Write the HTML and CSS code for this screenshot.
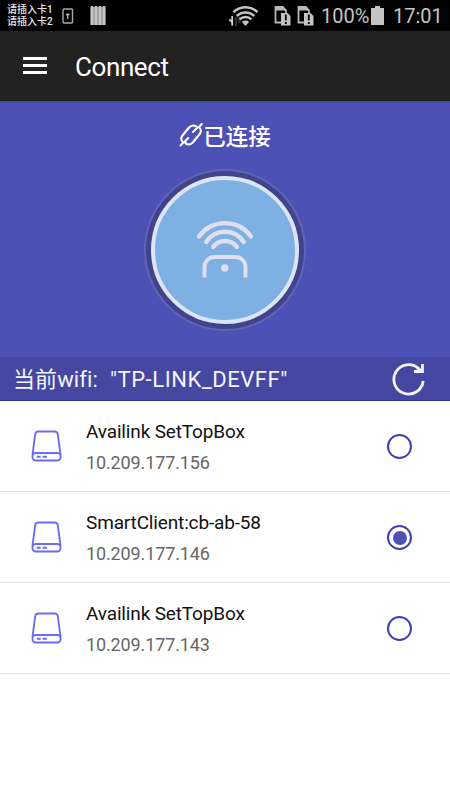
FILE: index.html
```html
<!DOCTYPE html>
<html lang="zh-CN">
<head>
    <meta charset="UTF-8">
    <meta name="viewport" content="width=device-width, initial-scale=1.0">
    <title>Connect</title>
    <link rel="stylesheet" href="styles.css">
</head>
<body>
    <div class="status-bar">
        <div class="sim-text">
            <span>请插入卡1</span>
            <span>请插入卡2</span>
        </div>
        <svg class="icon-usb" width="12" height="16" viewBox="0 0 12 16">
            <rect x="1" y="1" width="9.5" height="14" rx="1" fill="none" stroke="#aaa" stroke-width="1.4"/>
            <path d="M5.7 11V5.5M4 6.5h3.5" fill="none" stroke="#bbb" stroke-width="1.3"/>
        </svg>
        <svg class="icon-bars" width="17" height="20" viewBox="0 0 17 20">
            <path d="M.5 1h15v18h-15z" fill="#999"/>
            <path d="M2 0v19M6 0v19M10 0v19M14 0v19" stroke="#c4c4c4" stroke-width="2.6"/>
        </svg>
        <svg class="icon-wifi" width="30" height="20" viewBox="0 0 30 20">
            <path d="M7 11v9M10.5 11v6" stroke="#333" stroke-width="2.4"/>
            <path d="M3.2 10v9.5M3.2 16L.3 13.5" fill="none" stroke="#d0d0d0" stroke-width="1.8"/>
            <g fill="none" stroke="#c4c4c4" stroke-width="2.5">
                <path d="M4.5 6.2a17 17 0 0 1 24 0"/>
                <path d="M7.8 10a12.5 12.5 0 0 1 17.4 0"/>
                <path d="M10.6 13.3a8.5 8.5 0 0 1 11.8 0"/>
            </g>
            <path d="M12.8 15.8q3.700-2.400 7.400 0L16.500 20z" fill="#c4c4c4"/>
        </svg>
        <svg class="icon-sim" width="17" height="21" viewBox="0 0 17 21">
            <path d="M7 17.500H1.500V2H8.500L12 5.500V8" fill="none" stroke="#b8b8b8" stroke-width="1.800"/>
            <path d="M1 1h8l4 4.500H1z" fill="#b8b8b8"/>
            <path d="M7 8h6.500l3 3v9.500H7z" fill="#c4c4c4"/>
            <path d="M11.800 9.500v6M11.800 17v2" stroke="#000" stroke-width="1.800"/>
        </svg>
        <svg class="icon-sim" width="17" height="21" viewBox="0 0 17 21">
            <path d="M7 17.500H1.500V2H8.500L12 5.500V8" fill="none" stroke="#b8b8b8" stroke-width="1.800"/>
            <path d="M1 1h8l4 4.500H1z" fill="#b8b8b8"/>
            <path d="M7 8h6.500l3 3v9.500H7z" fill="#c4c4c4"/>
            <path d="M11.800 9.500v6M11.800 17v2" stroke="#000" stroke-width="1.800"/>
        </svg>
        <span class="battery-text">100%</span>
        <svg class="icon-battery" width="13" height="19" viewBox="0 0 13 19">
            <path d="M4 0h5v2h4v17H0V2h4z" fill="#c4c4c4"/>
        </svg>
        <span class="clock">17:01</span>
    </div>

    <div class="toolbar">
        <div class="menu-button">
            <span></span>
            <span></span>
            <span></span>
        </div>
        <h1>Connect</h1>
    </div>

    <div class="hero">
        <div class="state">
            <svg width="24" height="24" viewBox="0 0 24 24" fill="none" stroke="#fff" stroke-width="2.1" stroke-linecap="round" stroke-linejoin="round">
                <path d="M1.500 22.500l3-3C2 18 1.500 15 3.500 12.500L10 4.500C12.500 2 16.500 1.500 18.500 4.500L14 9"/>
                <path d="M22.700 1L20 4C22.200 6 22.200 9 20.700 11L14.200 19C11.200 22.300 7.500 22.500 5.700 18.800L9.200 15"/>
            </svg>
            <span>已连接</span>
        </div>
        <div class="dial">
            <div class="dial-inner">
                <svg width="60" height="60" viewBox="0 0 60 60" fill="none" stroke="#dfdff0" stroke-width="4.4" stroke-linecap="round">
                    <path d="M4 16.500a32 32 0 0 1 52 0"/>
                    <path d="M11.200 22a22.300 22.300 0 0 1 37.600 0"/>
                    <path d="M18.200 27a14.600 14.600 0 0 1 23.600 0"/>
                    <path d="M9.500 57.500V47a10 10 0 0 1 10-10h21a10 10 0 0 1 10 10v10.500" stroke-width="3.800" stroke-linecap="butt"/>
                    <circle cx="29.800" cy="48" r="3.700" fill="#dfdff0" stroke="none"/>
                </svg>
            </div>
        </div>
    </div>

    <div class="wifi-bar">
        <span class="wifi-label">当前wifi:</span>
        <span class="wifi-name">"TP-LINK_DEVFF"</span>
        <svg class="refresh" width="34" height="34" viewBox="0 0 34 34" fill="none" stroke="#f4f4fb" stroke-width="2.8">
            <path d="M31.200 19a14.700 14.700 0 1 1-4.500-12.300"/>
            <path d="M30.500 2v7.500H22"/>
            <path d="M25 5.500l4.500 3.500"/>
        </svg>
    </div>

    <div class="device-list">
        <div class="device">
            <svg class="device-icon" width="31" height="32" viewBox="0 0 32 32" preserveAspectRatio="none">
                <path d="M1.500 25L4.300 4.500Q4.700 1.500 7.500 1.500h17q2.800 0 3.200 3L30.500 25"/>
                <rect x="1.500" y="23" width="29" height="7.500" rx="3.300"/>
                <path d="M6 26.800h4M12 26.800h4.500"/>
            </svg>
            <div class="device-info">
                <div class="device-name">Availink SetTopBox</div>
                <div class="device-ip">10.209.177.156</div>
            </div>
            <div class="radio"></div>
        </div>
        <div class="device">
            <svg class="device-icon" width="31" height="32" viewBox="0 0 32 32" preserveAspectRatio="none">
                <path d="M1.500 25L4.300 4.500Q4.700 1.500 7.500 1.500h17q2.800 0 3.200 3L30.500 25"/>
                <rect x="1.500" y="23" width="29" height="7.500" rx="3.300"/>
                <path d="M6 26.800h4M12 26.800h4.500"/>
            </svg>
            <div class="device-info">
                <div class="device-name">SmartClient:cb-ab-58</div>
                <div class="device-ip">10.209.177.146</div>
            </div>
            <div class="radio checked"></div>
        </div>
        <div class="device">
            <svg class="device-icon" width="31" height="32" viewBox="0 0 32 32" preserveAspectRatio="none">
                <path d="M1.500 25L4.300 4.500Q4.700 1.500 7.500 1.500h17q2.800 0 3.200 3L30.500 25"/>
                <rect x="1.500" y="23" width="29" height="7.500" rx="3.300"/>
                <path d="M6 26.800h4M12 26.800h4.500"/>
            </svg>
            <div class="device-info">
                <div class="device-name">Availink SetTopBox</div>
                <div class="device-ip">10.209.177.143</div>
            </div>
            <div class="radio"></div>
        </div>
    </div>
</body>
</html>
```
FILE: styles.css
```css
* {
    box-sizing: border-box;
}

body {
    margin: 0;
    background-color: #fff;
    font-family: Roboto, "Noto Sans CJK SC", sans-serif;
    white-space: nowrap;
}

svg {
    display: block;
    flex-shrink: 0;
}

.status-bar {
    display: flex;
    align-items: center;
    height: 31px;
    padding-left: 7px;
    background-color: #000;
    color: #c4c4c4;
}

.sim-text {
    display: flex;
    flex-direction: column;
    width: 55px;
    padding-top: 1px;
    font-size: 10px;
    font-weight: 500;
    line-height: 12px;
    color: #e8e8e8;
}

.icon-bars {
    margin-left: 16px;
}

.icon-wifi {
    margin-left: 122px;
    margin-right: 15px;
}

.icon-sim {
    margin-right: 6px;
}

.battery-text {
    width: 50px;
    margin-left: 1px;
    font-size: 20px;
}

.clock {
    margin-left: 9px;
    font-size: 20px;
}

.toolbar {
    display: flex;
    align-items: center;
    height: 70px;
    padding-left: 23px;
    background-color: #222;
}

.toolbar h1 {
    margin: 2px 0 0 28px;
    font-size: 26px;
    font-weight: 400;
    letter-spacing: -0.4px;
    color: #fff;
}

.menu-button {
    display: flex;
    flex-direction: column;
    gap: 4px;
    width: 24px;
    margin-bottom: 1px;
}

.menu-button span {
    height: 3px;
    background-color: #fff;
}

.hero {
    display: flex;
    flex-direction: column;
    align-items: center;
    height: 256px;
    padding-top: 17px;
    background-color: #4d50b5;
    background-image: linear-gradient(rgba(0, 0, 0, 0.15), rgba(0, 0, 0, 0) 3px);
}

.state {
    display: flex;
    align-items: center;
    height: 34px;
    font-size: 22.5px;
    font-weight: 500;
    color: #fff;
}

.dial {
    display: flex;
    align-items: center;
    justify-content: center;
    width: 162px;
    height: 162px;
    margin-top: 17px;
    border: 2px solid #6263b5;
    border-radius: 50%;
    background-color: #42438d;
}

.dial-inner {
    display: flex;
    align-items: center;
    justify-content: center;
    width: 148px;
    height: 148px;
    border: 4px solid #dbe5f3;
    border-radius: 50%;
    background-color: #7eb0e4;
}

.wifi-bar {
    display: flex;
    align-items: center;
    height: 44px;
    padding: 0 24px 0 13px;
    border-bottom: 1px solid #3133a3;
    background-color: #4547a0;
    font-size: 22px;
    line-height: 32px;
    color: #f4f4fb;
}

.wifi-label {
    margin-top: 2px;
    letter-spacing: 0.1px;
}

.wifi-name {
    margin-top: 3px;
    margin-left: 12px;
    letter-spacing: 0.55px;
}

.refresh {
    margin-left: auto;
}

.device {
    display: flex;
    align-items: center;
    height: 91px;
    padding: 0 38px 0 31px;
    border-bottom: 1px solid #dedede;
}

.device-icon {
    fill: none;
    stroke: #696bfa;
    stroke-width: 1.9;
}

.device-info {
    margin-top: 3px;
    margin-left: 24px;
}

.device-name {
    font-size: 19px;
    line-height: 30px;
    letter-spacing: -0.15px;
    color: #111;
}

.device-ip {
    font-size: 18px;
    line-height: 32px;
    letter-spacing: -0.12px;
    color: #666;
}

.radio {
    width: 25px;
    height: 25px;
    margin-left: auto;
    padding: 3.5px;
    border: 2.5px solid #3d40ad;
    border-radius: 50%;
}

.radio.checked {
    background: #4d50b5 content-box;
}
```
